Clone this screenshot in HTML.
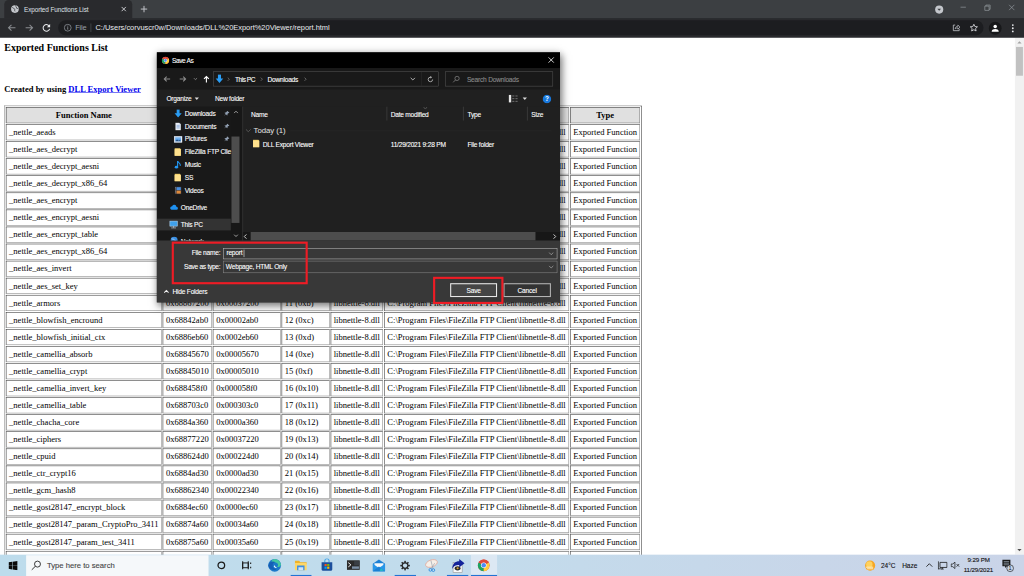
<!DOCTYPE html>
<html><head><meta charset="utf-8"><title>Exported Functions List</title>
<style>
html,body{margin:0;padding:0;width:1024px;height:576px;overflow:hidden;background:#fff;}
#root{position:absolute;left:0;top:0;width:1920px;height:1080px;transform:scale(0.5333333);transform-origin:0 0;overflow:hidden;background:#fff;font-family:"Liberation Sans",sans-serif;}
#root *{box-sizing:border-box;}
.abs{position:absolute;}

/* ---------- chrome ---------- */
#tabstrip{position:absolute;left:0;top:0;width:1920px;height:40px;background:#3c3f42;}
#tab{position:absolute;left:8px;top:0;width:240px;height:34px;background:#292a2d;border-radius:8px 8px 0 0;}
#tab .title{position:absolute;left:37px;top:10px;font-size:12px;line-height:16px;color:#dfe1e5;white-space:nowrap;letter-spacing:-0.2px;}
#toolbar{position:absolute;left:0;top:34px;width:1920px;height:37px;background:#292a2d;}
#omni{position:absolute;left:109px;top:3.500px;width:1735px;height:28px;border-radius:14px;background:#1c1d20;}
#omni .file{position:absolute;left:32px;top:5px;font-size:14px;line-height:18px;color:#9aa0a6;letter-spacing:-0.3px;}
#omni .sep{position:absolute;left:61px;top:6px;width:1px;height:16px;background:#5f6368;}
#omni .url{position:absolute;left:70px;top:5px;font-size:14px;line-height:18px;color:#e8eaed;white-space:nowrap;letter-spacing:-0.04px;}

/* ---------- dialog ---------- */
#dlg{position:absolute;left:294px;top:98px;width:756px;height:469px;background:#202020;box-shadow:3px 6px 14px rgba(0,0,0,0.5), 0 0 15px rgba(0,0,0,0.09);font-size:12.400px;color:#fff;overflow:hidden;}
#dlg .t{position:absolute;white-space:nowrap;line-height:16px;letter-spacing:-0.420px;margin-top:1.300px;-webkit-text-stroke-width:0.180px;}
#dlgwrap{position:absolute;left:0;top:0;width:1920px;height:1080px;pointer-events:none;}
.red{position:absolute;border:4.700px solid #ee1c25;}

/* ---------- taskbar ---------- */
#tb{position:absolute;left:0;top:1040px;width:1920px;height:40px;background:linear-gradient(90deg,#bddcec 0%,#c2dcec 45%,#c8d6e9 80%,#cad4e8 100%);font-size:12px;color:#111;overflow:hidden;}
#tb .t{position:absolute;white-space:nowrap;line-height:16px;-webkit-text-stroke-width:0.200px;}
#tb .ul{position:absolute;top:37.500px;height:2.500px;background:#2273d3;}
/* ---------- page ---------- */
#page{position:absolute;left:0;top:71px;width:1903px;height:970px;overflow:hidden;background:#fff;font-family:"Liberation Serif",serif;font-size:16px;color:#000;}
#page h3{position:absolute;left:8px;top:8px;margin:0;font-size:18.72px;font-weight:bold;line-height:21px;white-space:nowrap;}
#page h4{position:absolute;left:8px;top:87px;margin:0;font-size:16px;font-weight:bold;line-height:18px;white-space:nowrap;}
#page h4 a{color:#0000ee;text-decoration:underline;}
#page table{position:absolute;left:8px;top:127px;border-collapse:separate;border-spacing:2px;border:1px outset #808080;font-size:16px;line-height:18px;}
#page table td,#page table th{border:1px inset #808080;padding:5px;white-space:nowrap;box-sizing:content-box;}
#page table th{background:#e0e0e0;font-weight:bold;text-align:center;}
#page table th:nth-child(4){min-width:77.500px;}
#page table td{background:#fff;}
</style></head><body>
<div id="root">

<div id="tabstrip">
  <div id="tab">
    <svg class="abs" style="left:12px;top:9px" width="16" height="16" viewBox="0 0 16 16"><circle cx="8" cy="8" r="7.2" fill="#c4c7cc"/><path d="M3 5.2c1.3-.3 2.2.4 2.4 1.4.2 1 .9 1.2 1.7 1.3.9.2 1.1 1 .7 1.8-.5.9-.4 1.900.3 2.600M9.200 1.400c-.5 1 .1 1.700 1 2 .9.3 1.100 1 .6 1.700-.5.800.1 1.600 1 1.600 1 0 1.800.4 2.200 1.200" stroke="#292a2d" stroke-width="1.300" fill="none"/></svg>
    <div class="title">Exported Functions List</div>
    <svg class="abs" style="left:216px;top:9px" width="16" height="16" viewBox="0 0 16 16"><path d="M4 4l8 8M12 4l-8 8" stroke="#dfe1e5" stroke-width="1.600"/></svg>
  </div>
  <svg class="abs" style="left:261px;top:8px" width="18" height="18" viewBox="0 0 18 18"><path d="M9 3v12M3 9h12" stroke="#c4c7cc" stroke-width="1.800"/></svg>
  <!-- window controls -->
  <svg class="abs" style="left:1751px;top:7.500px" width="20" height="20" viewBox="0 0 20 20"><circle cx="10" cy="10" r="7.600" fill="#c4c7cc"/><path d="M6.500 8.300h7l-3.500 4z" fill="#3c3f42"/></svg>
  <svg class="abs" style="left:1797px;top:5px" width="18" height="18" viewBox="0 0 18 18"><path d="M4 8.500h10" stroke="#9aa0a6" stroke-width="1.200"/></svg>
  <svg class="abs" style="left:1842px;top:5px" width="18" height="18" viewBox="0 0 18 18"><path d="M4.500 6.500h8v8h-8zM6.500 6.500v-2h8v8h-2" stroke="#9aa0a6" stroke-width="1.200" fill="none"/></svg>
  <svg class="abs" style="left:1888px;top:5px" width="18" height="18" viewBox="0 0 18 18"><path d="M4 4l10 10M14 4l-10 10" stroke="#9aa0a6" stroke-width="1.200"/></svg>
</div>
<div id="toolbar">
  <svg class="abs" style="left:12px;top:7.500px" width="20" height="20" viewBox="0 0 20 20"><path d="M17 10H4M9.500 4.500L4 10l5.500 5.500" stroke="#8a8d91" stroke-width="2" fill="none"/></svg>
  <svg class="abs" style="left:45px;top:7.500px" width="20" height="20" viewBox="0 0 20 20"><path d="M3 10h13M10.500 4.500L16 10l-5.500 5.500" stroke="#8a8d91" stroke-width="2" fill="none"/></svg>
  <svg class="abs" style="left:77px;top:7.500px" width="20" height="20" viewBox="0 0 20 20"><path d="M15.800 8A6.200 6.200 0 1 0 16 12" stroke="#e8eaed" stroke-width="2" fill="none"/><path d="M17 3v6h-6z" fill="#e8eaed"/></svg>
  <div id="omni">
    <svg class="abs" style="left:9.500px;top:6px" width="16" height="16" viewBox="0 0 16 16"><circle cx="8" cy="8" r="6.400" stroke="#9aa0a6" stroke-width="1.300" fill="none"/><path d="M8 7v4.500M8 4.300v1.500" stroke="#9aa0a6" stroke-width="1.500"/></svg>
    <div class="file">File</div><div class="sep"></div>
    <div class="url">C:/Users/corvuscr0w/Downloads/DLL%20Export%20Viewer/report.html</div>
    <svg class="abs" style="left:1675px;top:5px" width="18" height="18" viewBox="0 0 18 18"><path d="M7 4H3.500v10.500h11V11" stroke="#c4c7cc" stroke-width="1.500" fill="none"/><path d="M7 11c.3-3 2-4.500 5-4.700V4l4 3.800-4 3.800V9.200C10 9.200 8.200 9.700 7 11z" fill="none" stroke="#c4c7cc" stroke-width="1.300"/></svg>
    <svg class="abs" style="left:1708px;top:5px" width="18" height="18" viewBox="0 0 18 18"><path d="M9 2.500l2 4.300 4.700.5-3.500 3.200 1 4.600L9 12.700l-4.200 2.400 1-4.600L2.300 7.300 7 6.800z" stroke="#e8eaed" stroke-width="1.500" fill="none" stroke-linejoin="round"/></svg>
  </div>
  <svg class="abs" style="left:1853px;top:6px" width="26" height="26" viewBox="0 0 26 26"><circle cx="13" cy="13" r="12" fill="#17181a"/><circle cx="13" cy="9.500" r="3.300" fill="#fff"/><path d="M6.500 18.500c0-3 3.500-4.300 6.500-4.300s6.500 1.300 6.500 4.300v1h-13z" fill="#fff"/></svg>
  <svg class="abs" style="left:1889px;top:9px" width="20" height="20" viewBox="0 0 20 20"><circle cx="10" cy="4" r="1.700" fill="#e8eaed"/><circle cx="10" cy="10" r="1.700" fill="#e8eaed"/><circle cx="10" cy="16" r="1.700" fill="#e8eaed"/></svg>
</div>

<div id="page">
<h3>Exported Functions List</h3>
<h4>Created by using <a>DLL Export Viewer</a></h4>
<table><tr><th>Function Name</th><th>Address</th><th>Relative Address</th><th>Ordinal</th><th>Filename</th><th>Full Path</th><th>Type</th></tr>
<tr><td>_nettle_aeads</td><td>0x68877240</td><td>0x00037240</td><td>1 (0x1)</td><td>libnettle-8.dll</td><td>C:\Program Files\FileZilla FTP Client\libnettle-8.dll</td><td>Exported Function</td></tr>
<tr><td>_nettle_aes_decrypt</td><td>0x68841500</td><td>0x00001500</td><td>2 (0x2)</td><td>libnettle-8.dll</td><td>C:\Program Files\FileZilla FTP Client\libnettle-8.dll</td><td>Exported Function</td></tr>
<tr><td>_nettle_aes_decrypt_aesni</td><td>0x68861eb0</td><td>0x00021eb0</td><td>3 (0x3)</td><td>libnettle-8.dll</td><td>C:\Program Files\FileZilla FTP Client\libnettle-8.dll</td><td>Exported Function</td></tr>
<tr><td>_nettle_aes_decrypt_x86_64</td><td>0x68861640</td><td>0x00021640</td><td>4 (0x4)</td><td>libnettle-8.dll</td><td>C:\Program Files\FileZilla FTP Client\libnettle-8.dll</td><td>Exported Function</td></tr>
<tr><td>_nettle_aes_encrypt</td><td>0x68841a70</td><td>0x00001a70</td><td>5 (0x5)</td><td>libnettle-8.dll</td><td>C:\Program Files\FileZilla FTP Client\libnettle-8.dll</td><td>Exported Function</td></tr>
<tr><td>_nettle_aes_encrypt_aesni</td><td>0x68861f50</td><td>0x00021f50</td><td>6 (0x6)</td><td>libnettle-8.dll</td><td>C:\Program Files\FileZilla FTP Client\libnettle-8.dll</td><td>Exported Function</td></tr>
<tr><td>_nettle_aes_encrypt_table</td><td>0x6886e640</td><td>0x0002e640</td><td>7 (0x7)</td><td>libnettle-8.dll</td><td>C:\Program Files\FileZilla FTP Client\libnettle-8.dll</td><td>Exported Function</td></tr>
<tr><td>_nettle_aes_encrypt_x86_64</td><td>0x68861a90</td><td>0x00021a90</td><td>8 (0x8)</td><td>libnettle-8.dll</td><td>C:\Program Files\FileZilla FTP Client\libnettle-8.dll</td><td>Exported Function</td></tr>
<tr><td>_nettle_aes_invert</td><td>0x68841fe0</td><td>0x00001fe0</td><td>9 (0x9)</td><td>libnettle-8.dll</td><td>C:\Program Files\FileZilla FTP Client\libnettle-8.dll</td><td>Exported Function</td></tr>
<tr><td>_nettle_aes_set_key</td><td>0x688421a0</td><td>0x000021a0</td><td>10 (0xa)</td><td>libnettle-8.dll</td><td>C:\Program Files\FileZilla FTP Client\libnettle-8.dll</td><td>Exported Function</td></tr>
<tr><td>_nettle_armors</td><td>0x68867200</td><td>0x00037200</td><td>11 (0xb)</td><td>libnettle-8.dll</td><td>C:\Program Files\FileZilla FTP Client\libnettle-8.dll</td><td>Exported Function</td></tr>
<tr><td>_nettle_blowfish_encround</td><td>0x68842ab0</td><td>0x00002ab0</td><td>12 (0xc)</td><td>libnettle-8.dll</td><td>C:\Program Files\FileZilla FTP Client\libnettle-8.dll</td><td>Exported Function</td></tr>
<tr><td>_nettle_blowfish_initial_ctx</td><td>0x6886eb60</td><td>0x0002eb60</td><td>13 (0xd)</td><td>libnettle-8.dll</td><td>C:\Program Files\FileZilla FTP Client\libnettle-8.dll</td><td>Exported Function</td></tr>
<tr><td>_nettle_camellia_absorb</td><td>0x68845670</td><td>0x00005670</td><td>14 (0xe)</td><td>libnettle-8.dll</td><td>C:\Program Files\FileZilla FTP Client\libnettle-8.dll</td><td>Exported Function</td></tr>
<tr><td>_nettle_camellia_crypt</td><td>0x68845010</td><td>0x00005010</td><td>15 (0xf)</td><td>libnettle-8.dll</td><td>C:\Program Files\FileZilla FTP Client\libnettle-8.dll</td><td>Exported Function</td></tr>
<tr><td>_nettle_camellia_invert_key</td><td>0x688458f0</td><td>0x000058f0</td><td>16 (0x10)</td><td>libnettle-8.dll</td><td>C:\Program Files\FileZilla FTP Client\libnettle-8.dll</td><td>Exported Function</td></tr>
<tr><td>_nettle_camellia_table</td><td>0x688703c0</td><td>0x000303c0</td><td>17 (0x11)</td><td>libnettle-8.dll</td><td>C:\Program Files\FileZilla FTP Client\libnettle-8.dll</td><td>Exported Function</td></tr>
<tr><td>_nettle_chacha_core</td><td>0x6884a360</td><td>0x0000a360</td><td>18 (0x12)</td><td>libnettle-8.dll</td><td>C:\Program Files\FileZilla FTP Client\libnettle-8.dll</td><td>Exported Function</td></tr>
<tr><td>_nettle_ciphers</td><td>0x68877220</td><td>0x00037220</td><td>19 (0x13)</td><td>libnettle-8.dll</td><td>C:\Program Files\FileZilla FTP Client\libnettle-8.dll</td><td>Exported Function</td></tr>
<tr><td>_nettle_cpuid</td><td>0x688624d0</td><td>0x000224d0</td><td>20 (0x14)</td><td>libnettle-8.dll</td><td>C:\Program Files\FileZilla FTP Client\libnettle-8.dll</td><td>Exported Function</td></tr>
<tr><td>_nettle_ctr_crypt16</td><td>0x6884ad30</td><td>0x0000ad30</td><td>21 (0x15)</td><td>libnettle-8.dll</td><td>C:\Program Files\FileZilla FTP Client\libnettle-8.dll</td><td>Exported Function</td></tr>
<tr><td>_nettle_gcm_hash8</td><td>0x68862340</td><td>0x00022340</td><td>22 (0x16)</td><td>libnettle-8.dll</td><td>C:\Program Files\FileZilla FTP Client\libnettle-8.dll</td><td>Exported Function</td></tr>
<tr><td>_nettle_gost28147_encrypt_block</td><td>0x6884ec60</td><td>0x0000ec60</td><td>23 (0x17)</td><td>libnettle-8.dll</td><td>C:\Program Files\FileZilla FTP Client\libnettle-8.dll</td><td>Exported Function</td></tr>
<tr><td>_nettle_gost28147_param_CryptoPro_3411</td><td>0x68874a60</td><td>0x00034a60</td><td>24 (0x18)</td><td>libnettle-8.dll</td><td>C:\Program Files\FileZilla FTP Client\libnettle-8.dll</td><td>Exported Function</td></tr>
<tr><td>_nettle_gost28147_param_test_3411</td><td>0x68875a60</td><td>0x00035a60</td><td>25 (0x19)</td><td>libnettle-8.dll</td><td>C:\Program Files\FileZilla FTP Client\libnettle-8.dll</td><td>Exported Function</td></tr>
<tr><td>_nettle_gost28147_param_test_89</td><td>0x68876a60</td><td>0x00036a60</td><td>26 (0x1a)</td><td>libnettle-8.dll</td><td>C:\Program Files\FileZilla FTP Client\libnettle-8.dll</td><td>Exported Function</td></tr>
</table>
</div>

<div class="abs" style="left:1903px;top:71px;width:17px;height:969px;background:#f1f1f1;">
  <svg class="abs" style="left:0;top:0" width="17" height="17" viewBox="0 0 17 17"><path d="M4.500 10.500l4-4 4 4z" fill="#a3a3a3"/></svg>
  <div class="abs" style="left:2px;top:17px;width:13px;height:54px;background:#c1c1c1;"></div>
  <svg class="abs" style="left:0;top:952px" width="17" height="17" viewBox="0 0 17 17"><path d="M4.500 6.500l4 4 4-4z" fill="#505050"/></svg>
</div>


<div id="dlg">
  <!-- title bar -->
  <div class="abs" style="left:0;top:0;width:756px;height:30px;background:#000;"></div>
  <svg class="abs" style="left:9px;top:7.500px" width="14.500" height="14.500" viewBox="0 0 16 16"><circle cx="8" cy="8" r="7.500" fill="#de4b3c"/><path d="M8 8L1.500 4.300A7.500 7.500 0 0 0 8 15.500z" fill="#1da462"/><path d="M8 8l0 7.500A7.500 7.500 0 0 0 14.500 4.300z" fill="#ffcd40"/><path d="M8 8L1.500 4.300A7.500 7.500 0 0 1 14.500 4.300z" fill="#de4b3c"/><circle cx="8" cy="8" r="3.400" fill="#fff"/><circle cx="8" cy="8" r="2.700" fill="#4c8bf5"/></svg>
  <div class="t" style="left:28.500px;top:6.500px;letter-spacing:-0.800px">Save As</div>
  <svg class="abs" style="left:733px;top:7.500px" width="13" height="13" viewBox="0 0 13 13"><path d="M1.500 1.500l10 10M11.500 1.500l-10 10" stroke="#fff" stroke-width="1.500"/></svg>
  <!-- nav bar -->
  <div class="abs" style="left:0;top:30px;width:756px;height:40px;background:#191919;"></div>
  <svg class="abs" style="left:11px;top:42px" width="16" height="16" viewBox="0 0 16 16"><path d="M14 8H3M7.500 3.500L3 8l4.500 4.500" stroke="#8c8c8c" stroke-width="2" fill="none"/></svg>
  <svg class="abs" style="left:41px;top:42px" width="16" height="16" viewBox="0 0 16 16"><path d="M2 8h11M8.500 3.500L13 8l-4.500 4.500" stroke="#8c8c8c" stroke-width="2" fill="none"/></svg>
  <svg class="abs" style="left:68px;top:46px" width="9" height="8" viewBox="0 0 9 8"><path d="M1.500 2.500l3 3 3-3" stroke="#8c8c8c" stroke-width="1.600" fill="none"/></svg>
  <svg class="abs" style="left:85px;top:42px" width="16" height="16" viewBox="0 0 16 16"><path d="M8 14.500V3.500M3.500 8L8 3.500 12.500 8" stroke="#fff" stroke-width="2.100" fill="none"/></svg>
  <div class="abs" style="left:106px;top:36px;width:423px;height:28px;border:1px solid #555;background:#191919;"></div>
  <svg class="abs" style="left:109px;top:41px" width="17" height="17" viewBox="0 0 16 16"><path d="M5.300 0.500h5.400v7h4L8 15.500 1.300 7.500h4z" fill="#2a9df4"/></svg>
  <svg class="abs" style="left:131px;top:46px" width="7" height="9" viewBox="0 0 7 9"><path d="M2 1.500l3 3-3 3" stroke="#9a9a9a" stroke-width="1.100" fill="none"/></svg>
  <div class="t" style="left:146.500px;top:41.500px;letter-spacing:-0.900px">This PC</div>
  <svg class="abs" style="left:193px;top:46px" width="7" height="9" viewBox="0 0 7 9"><path d="M2 1.500l3 3-3 3" stroke="#9a9a9a" stroke-width="1.100" fill="none"/></svg>
  <div class="t" style="left:207.500px;top:41.500px">Downloads</div>
  <svg class="abs" style="left:275px;top:46px" width="7" height="9" viewBox="0 0 7 9"><path d="M2 1.500l3 3-3 3" stroke="#9a9a9a" stroke-width="1.100" fill="none"/></svg>
  <svg class="abs" style="left:474px;top:46px" width="12" height="9" viewBox="0 0 12 9"><path d="M2 2l4 4 4-4" stroke="#dcdcdc" stroke-width="1.500" fill="none"/></svg>
  <div class="abs" style="left:496px;top:37px;width:1px;height:26px;background:#2e2e2e;"></div>
  <svg class="abs" style="left:506px;top:44px" width="14" height="14" viewBox="0 0 16 16"><path d="M12.800 8A4.800 4.800 0 1 1 8 3.200" stroke="#dcdcdc" stroke-width="1.500" fill="none"/><path d="M8 .5l3.300 2.700L8 5.900z" fill="#dcdcdc"/></svg>
  <div class="abs" style="left:541px;top:36px;width:202px;height:28px;border:1px solid #555;background:#191919;"></div>
  <svg class="abs" style="left:554px;top:43px" width="15" height="15" viewBox="0 0 15 15"><circle cx="9" cy="6" r="4" stroke="#8c8c8c" stroke-width="1.300" fill="none"/><path d="M6 9L1.500 13.500" stroke="#8c8c8c" stroke-width="1.400"/></svg>
  <div class="t" style="left:581.500px;top:41.500px;color:#8a8a8a">Search Downloads</div>
  <!-- toolbar -->
  <div class="abs" style="left:0;top:70px;width:756px;height:32px;background:#202020;"></div>
  <div class="t" style="left:18px;top:79px">Organize</div>
  <svg class="abs" style="left:70px;top:84px" width="10" height="7" viewBox="0 0 10 7"><path d="M1 1h8l-4 4.500z" fill="#dcdcdc"/></svg>
  <div class="t" style="left:109px;top:79px">New folder</div>
  <svg class="abs" style="left:659px;top:78px" width="20" height="18" viewBox="0 0 20 18"><rect x="1" y="2" width="4.500" height="14" fill="#e6e6e6"/><path d="M7.500 4h4M13.500 4h4M7.500 9h4M13.500 9h4M7.500 14h4M13.500 14h4" stroke="#8c8c8c" stroke-width="1.400"/></svg>
  <svg class="abs" style="left:685px;top:84px" width="10" height="7" viewBox="0 0 10 7"><path d="M1 1h8l-4 4.500z" fill="#dcdcdc"/></svg>
  <svg class="abs" style="left:723px;top:79px" width="17" height="17" viewBox="0 0 17 17"><circle cx="8.500" cy="8.500" r="8" fill="#1878dc"/><text x="8.500" y="12.700" font-family="Liberation Sans" font-weight="bold" font-size="12" text-anchor="middle" fill="#fff">?</text></svg>
  <!-- sidebar -->
  <div class="abs" style="left:0;top:102px;width:156px;height:251px;background:#191919;"></div>
  <div class="abs" style="left:0;top:312px;width:139px;height:22px;background:#333;"></div>
  <div class="abs" style="left:139px;top:102px;width:21px;height:251px;background:#171717;"></div>
  <div class="abs" style="left:139.500px;top:158px;width:15px;height:162px;background:#4d4d4d;"></div>
  <svg class="abs" style="left:142.500px;top:107.500px" width="11" height="8" viewBox="0 0 11 8"><path d="M2 6l3.500-3.500L9 6" stroke="#a8a8a8" stroke-width="1.700" fill="none"/></svg>
  <svg class="abs" style="left:142.500px;top:340px" width="11" height="8" viewBox="0 0 11 8"><path d="M2 2l3.500 3.500L9 2" stroke="#b0b0b0" stroke-width="1.700" fill="none"/></svg>
  <div class="abs" style="left:160px;top:102px;width:1.500px;height:251px;background:#2e2e2e;"></div>
  <svg class="abs" style="left:32px;top:107px" width="16" height="16" viewBox="0 0 16 16"><path d="M5.300 0.500h5.400v7h4L8 15.500 1.300 7.500h4z" fill="#2a9df4"/></svg>
  <div class="t" style="left:52.500px;top:106.0px">Downloads</div>
  <svg class="abs" style="left:32px;top:131px" width="16" height="16" viewBox="0 0 16 16"><path d="M3 1h7l3 3v11H3z" fill="#e9eef5"/><path d="M5 6h6M5 8.500h6M5 11h6" stroke="#5a8ad0" stroke-width="1"/><path d="M10 1v3h3" fill="#b5c7e0"/></svg>
  <div class="t" style="left:52.500px;top:130.0px">Documents</div>
  <svg class="abs" style="left:32px;top:155px" width="16" height="16" viewBox="0 0 16 16"><rect x="0.500" y="2.500" width="15" height="11.500" fill="#f2f5fa" stroke="#c5d2e2"/><rect x="2.500" y="4.500" width="11" height="7.500" fill="#5aa2ea"/><path d="M2.500 12l3.500-3.500 3 2.500 2-1.500 2.500 2.500z" fill="#2b4f7a"/><rect x="2.500" y="4.500" width="11" height="2" fill="#9cc8f5"/></svg>
  <div class="t" style="left:52.500px;top:154.0px">Pictures</div>
  <svg class="abs" style="left:32px;top:179px" width="16" height="16" viewBox="0 0 16 16"><path d="M1.500 1h10l1.500 2v12H1.500z" fill="#f5d36c"/><path d="M1.500 3h11.500v12H1.500z" fill="#ffe18d"/></svg>
  <div class="t" style="left:52.500px;top:178.0px">FileZilla FTP Clie</div>
  <svg class="abs" style="left:32px;top:203px" width="16" height="16" viewBox="0 0 16 16"><path d="M7 1v11" stroke="#2196f3" stroke-width="2"/><ellipse cx="4.800" cy="12.500" rx="3.200" ry="2.500" fill="#2196f3"/><path d="M7 1.500c1.500 3 6 3.500 5 8.500" stroke="#2196f3" stroke-width="2" fill="none"/></svg>
  <div class="t" style="left:52.500px;top:202.0px">Music</div>
  <svg class="abs" style="left:32px;top:227px" width="16" height="16" viewBox="0 0 16 16"><path d="M1.500 1h10l1.500 2v12H1.500z" fill="#f5d36c"/><path d="M1.500 3h11.500v12H1.500z" fill="#ffe18d"/></svg>
  <div class="t" style="left:52.500px;top:226.0px">SS</div>
  <svg class="abs" style="left:32px;top:251px" width="16" height="16" viewBox="0 0 16 16"><rect x="2" y="1" width="12" height="14" fill="#3a3a40"/><rect x="5" y="2" width="8" height="5.500" fill="#4a90e0"/><rect x="5" y="8.500" width="8" height="5.500" fill="#e08a3a"/><path d="M3 2.500h1M3 5h1M3 7.500h1M3 10h1M3 12.500h1" stroke="#ddd" stroke-width="1.200"/></svg>
  <div class="t" style="left:52.500px;top:250.0px">Videos</div>
  <svg class="abs" style="left:126px;top:109px" width="11" height="11" viewBox="0 0 12 12"><path d="M7 1l4 4-1 .8-1-.3-2 2 .3 2-1 .8-2.300-2.300L1.500 10.500 1 10l2.500-2.500L1.200 5.200 2 4.200l2 .3 2-2-.3-1z" fill="#93a1b4"/></svg>
  <svg class="abs" style="left:126px;top:133px" width="11" height="11" viewBox="0 0 12 12"><path d="M7 1l4 4-1 .8-1-.3-2 2 .3 2-1 .8-2.300-2.300L1.500 10.500 1 10l2.500-2.500L1.200 5.200 2 4.200l2 .3 2-2-.3-1z" fill="#93a1b4"/></svg>
  <svg class="abs" style="left:126px;top:157px" width="11" height="11" viewBox="0 0 12 12"><path d="M7 1l4 4-1 .8-1-.3-2 2 .3 2-1 .8-2.300-2.300L1.500 10.500 1 10l2.500-2.500L1.200 5.200 2 4.200l2 .3 2-2-.3-1z" fill="#93a1b4"/></svg>
  <svg class="abs" style="left:23px;top:283px" width="17" height="16" viewBox="0 0 17 16"><path d="M4.500 12.500h9a3 3 0 0 0 .3-6 4.200 4.200 0 0 0-8-1A3.600 3.600 0 0 0 4.500 12.500z" fill="#1e90f0"/></svg>
  <div class="t" style="left:45px;top:282.0px">OneDrive</div>
  <svg class="abs" style="left:23px;top:315px" width="17" height="16" viewBox="0 0 17 16"><rect x="1.500" y="1.500" width="14" height="9.500" fill="#3fa0ea" stroke="#bcd8f0" stroke-width="1"/><path d="M4 14.500h9M8.500 11v3" stroke="#c8d0d8" stroke-width="1.400"/></svg>
  <div class="t" style="left:45px;top:314.0px">This PC</div>
  <svg class="abs" style="left:25px;top:345px" width="15" height="15" viewBox="0 0 15 15"><circle cx="7.500" cy="7.500" r="6.500" fill="#3a8ee0"/><path d="M3 4.500c2 1.500 3 .5 4.500 1.500s1 3 3 3" stroke="#bfe0ff" stroke-width="1.400" fill="none"/></svg>
  <div class="t" style="left:45px;top:346.0px">Network</div>
  <!-- main pane header -->
  <div class="t" style="left:176.500px;top:107.500px">Name</div>
  <div class="abs" style="left:431px;top:102px;width:1px;height:26px;background:#4d4d4d;"></div>
  <div class="t" style="left:438.500px;top:107.500px">Date modified</div>
  <svg class="abs" style="left:499px;top:102px" width="9" height="5" viewBox="0 0 9 5"><path d="M1 1l3.500 3L8 1" stroke="#8c8c8c" stroke-width="1" fill="none"/></svg>
  <div class="abs" style="left:574px;top:102px;width:1px;height:26px;background:#4d4d4d;"></div>
  <div class="t" style="left:582.500px;top:107.500px">Type</div>
  <div class="abs" style="left:694px;top:102px;width:1px;height:26px;background:#4d4d4d;"></div>
  <div class="t" style="left:702px;top:107.500px">Size</div>
  <!-- group -->
  <svg class="abs" style="left:166px;top:143px" width="11" height="8" viewBox="0 0 11 8"><path d="M1 1.500l4.500 4.500L10 1.500" stroke="#7a7a7a" stroke-width="1.100" fill="none"/></svg>
  <div class="t" style="left:181.500px;top:135.700px;font-size:14.600px;line-height:19px;color:#e4e4e4;letter-spacing:-0.100px;-webkit-text-stroke-width:0">Today (1)</div>
  <div class="abs" style="left:250px;top:147px;width:490px;height:1px;background:#2c2c2c;"></div>
  <svg class="abs" style="left:178.500px;top:163px" width="16" height="16" viewBox="0 0 16 16"><path d="M1.500 1h10l1.500 2v12H1.500z" fill="#f5d36c"/><path d="M1.500 3h11.500v12H1.500z" fill="#ffe18d"/></svg>
  <div class="t" style="left:198.500px;top:163.500px">DLL Export Viewer</div>
  <div class="t" style="left:438.500px;top:163.500px">11/29/2021 9:28 PM</div>
  <div class="t" style="left:582.500px;top:163.500px">File folder</div>
  <!-- h scrollbar -->
  <div class="abs" style="left:161.500px;top:337px;width:594.500px;height:16px;background:#171717;"></div>
  <div class="abs" style="left:176px;top:337px;width:534px;height:16px;background:#4d4d4d;"></div>
  <svg class="abs" style="left:162px;top:340px" width="8" height="11" viewBox="0 0 8 11"><path d="M6 1.500l-4 4 4 4" stroke="#d8d8d8" stroke-width="1.800" fill="none"/></svg>
  <svg class="abs" style="left:742px;top:340px" width="8" height="11" viewBox="0 0 8 11"><path d="M2 1.500l4 4-4 4" stroke="#d8d8d8" stroke-width="1.800" fill="none"/></svg>
  <!-- bottom panel -->
  <div class="abs" style="left:0;top:353px;width:756px;height:116px;background:#383838;"></div>
  <div class="t" style="left:0;top:367.700px;width:119px;text-align:right">File name:</div>
  <div class="abs" style="left:124.500px;top:366.500px;width:626px;height:21px;border:1.500px solid #bdbdbd;background:#383838;"></div>
  <div class="t" style="left:130.500px;top:367.700px">report</div>
  <div class="abs" style="left:162.500px;top:370px;width:1px;height:14px;background:#fff;"></div>
  <svg class="abs" style="left:734px;top:374px" width="11" height="8" viewBox="0 0 11 8"><path d="M1.500 1.500l4 4 4-4" stroke="#bdbdbd" stroke-width="1.200" fill="none"/></svg>
  <div class="t" style="left:0;top:393.700px;width:119px;text-align:right;letter-spacing:-0.550px">Save as type:</div>
  <div class="abs" style="left:124.500px;top:391px;width:626px;height:23px;border:1px solid #8c8c8c;background:#383838;"></div>
  <div class="t" style="left:129.500px;top:393.700px">Webpage, HTML Only</div>
  <svg class="abs" style="left:734px;top:399px" width="11" height="8" viewBox="0 0 11 8"><path d="M1.500 1.500l4 4 4-4" stroke="#bdbdbd" stroke-width="1.200" fill="none"/></svg>
  <svg class="abs" style="left:11.500px;top:444px" width="12" height="9" viewBox="0 0 12 9"><path d="M2 6.500l4-4 4 4" stroke="#f0f0f0" stroke-width="2" fill="none"/></svg>
  <div class="t" style="left:29.500px;top:440.500px">Hide Folders</div>
  <div class="abs" style="left:550px;top:432.500px;width:88px;height:26px;border:2px solid #e8e8e8;background:#454545;"></div>
  <div class="t" style="left:550px;top:437.500px;width:88px;text-align:center">Save</div>
  <div class="abs" style="left:650px;top:432.500px;width:88.500px;height:26px;border:2px solid #b4b4b4;background:#333;"></div>
  <div class="t" style="left:650px;top:437.500px;width:88.500px;text-align:center">Cancel</div>
</div>
<div class="red" style="left:322.300px;top:453.200px;width:255px;height:79.800px;"></div>
<div class="red" style="left:811.900px;top:519.400px;width:132px;height:50.800px;"></div>


<div id="tb">
  <svg class="abs" style="left:15.500px;top:11.500px" width="17" height="17" viewBox="0 0 17 17"><path d="M0 2.400l6.900-1v6.700H0zM7.800 1.300L17 0v8.100H7.800zM0 8.900h6.900v6.700l-6.900-1zM7.800 8.900H17V17l-9.200-1.300z" fill="#0a0a0a"/></svg>
  <div class="abs" style="left:49px;top:0.500px;width:342px;height:40px;background:#f5f8fa;"></div>
  <svg class="abs" style="left:58px;top:9.500px" width="20" height="20" viewBox="0 0 20 20"><circle cx="12.300" cy="7.700" r="5.600" stroke="#2a2a2a" stroke-width="1.700" fill="none"/><path d="M8.300 11.700L1.500 18.500" stroke="#2a2a2a" stroke-width="1.800"/></svg>
  <div class="t" style="left:88px;top:11px;font-size:14.400px;line-height:18px;color:#444;-webkit-text-stroke-width:0.200px;">Type here to search</div>
  <svg class="abs" style="left:404px;top:8.500px" width="22" height="22" viewBox="0 0 22 22"><circle cx="11" cy="11" r="6.200" stroke="#1a1a1a" stroke-width="2.400" fill="none"/></svg>
  <svg class="abs" style="left:451px;top:8.500px" width="24" height="22" viewBox="0 0 24 22"><path d="M4 3.500v15M14.500 3.500v15" stroke="#1a1a1a" stroke-width="2"/><path d="M4 6.500h10.500v9H4z" stroke="#1a1a1a" stroke-width="1.800" fill="none"/><path d="M19 5.500v3M19 13.500v3" stroke="#1a1a1a" stroke-width="2"/></svg>
  <!-- edge -->
  <svg class="abs" style="left:501.500px;top:7px" width="26" height="26" viewBox="0 0 24 24"><circle cx="12" cy="12" r="11" fill="#1b78c9"/><path d="M12 1a11 11 0 0 1 11 10c-1 3-4 4.500-7 4 2-1.500 2.500-4 1-6-2-2.500-6-2.500-9 0C5 5 8 1.500 12 1z" fill="#45c8a0"/><path d="M1 12C2 6 9 3 14 7c-3-.5-5.500 1.500-5.500 5s2.500 6.500 6.500 7c-6 2.500-14-.5-14-7z" fill="#155fb5"/><path d="M12.500 12.500c0 2 1.500 3.500 4 3.300-1 .9-4 1.200-5.500-.8-1-1.500-.3-3.500 1.500-2.500z" fill="#e8f4ff"/></svg>
  <!-- explorer -->
  <svg class="abs" style="left:551.500px;top:9px" width="24" height="22" viewBox="0 0 24 22"><path d="M1 2.500h8l2 2.500h12v4H1z" fill="#f0b429"/><path d="M1 6.500h22V20H1z" fill="#ffd766"/><path d="M5 11.500h14V20H5z" fill="#3f8ee0"/><path d="M7.500 14.500h9V20h-9z" fill="#cfe4f8"/></svg>
  <!-- store -->
  <svg class="abs" style="left:600.500px;top:7px" width="24" height="25" viewBox="0 0 24 25"><path d="M8 7V4.500a4 4 0 0 1 8 0V7" stroke="#2f9be8" stroke-width="1.800" fill="none"/><path d="M2 7h20v14a2 2 0 0 1-2 2H4a2 2 0 0 1-2-2z" fill="#1d4f9c"/><rect x="7.500" y="10.500" width="4" height="4" fill="#f25022"/><rect x="12.500" y="10.500" width="4" height="4" fill="#7fba00"/><rect x="7.500" y="15.500" width="4" height="4" fill="#00a4ef"/><rect x="12.500" y="15.500" width="4" height="4" fill="#ffb900"/></svg>
  <!-- terminal -->
  <svg class="abs" style="left:649.500px;top:10px" width="25" height="21" viewBox="0 0 25 21"><rect x="0.500" y="0.500" width="24" height="18" fill="#2b2b2b"/><path d="M3 5l5 4-5 4" stroke="#f2f2f2" stroke-width="1.800" fill="none"/><rect x="10" y="12" width="13" height="4.500" fill="#7a8fa6"/><rect x="14" y="2" width="10" height="8" fill="#3a3f45"/></svg>
  <!-- mail -->
  <svg class="abs" style="left:698px;top:8px" width="25" height="25" viewBox="0 0 25 25"><path d="M1 9L12.500 1 24 9v14H1z" fill="#1b7fd4"/><path d="M4 8h17v9H4z" fill="#f4f8fc"/><path d="M1 9l11.500 8L24 9v14H1z" fill="#2896e8"/><path d="M1 23l11.500-9L24 23z" fill="#1b7fd4"/><path d="M16 17l6 5-8 .5z" fill="#2bd0c0" opacity=".7"/></svg>
  <!-- settings -->
  <svg class="abs" style="left:748.500px;top:9.500px" width="21" height="21" viewBox="0 0 24 24"><g fill="#2a2a2a"><circle cx="12" cy="12" r="7.300"/><rect x="10.300" y="1.800" width="3.400" height="20.400"/><rect x="10.300" y="1.800" width="3.400" height="20.400" transform="rotate(45 12 12)"/><rect x="10.300" y="1.800" width="3.400" height="20.400" transform="rotate(90 12 12)"/><rect x="10.300" y="1.800" width="3.400" height="20.400" transform="rotate(135 12 12)"/></g><circle cx="12" cy="12" r="4.600" fill="#c3dcec"/></svg>
  <!-- snip -->
  <svg class="abs" style="left:795px;top:7px" width="28" height="27" viewBox="0 0 28 27"><ellipse cx="14" cy="9.500" rx="11.500" ry="6.500" transform="rotate(-20 14 9.500)" fill="#f6efe8" stroke="#e4a89a" stroke-width="1.400"/><path d="M13 4l4 16M20 9l-7 11" stroke="#9aa4b0" stroke-width="1.300"/><circle cx="17.500" cy="22" r="2.600" stroke="#2a8ae0" stroke-width="1.600" fill="none"/><circle cx="12" cy="21.500" r="2.600" stroke="#2a8ae0" stroke-width="1.600" fill="none"/></svg>
  <!-- shortcut -->
  <svg class="abs" style="left:846px;top:6px" width="26" height="29" viewBox="0 0 26 29"><rect x="3.500" y="8.500" width="17" height="19" fill="#f8f8f8" stroke="#8a8a8a"/><ellipse cx="12" cy="19.500" rx="5.500" ry="4" fill="#2a2a2a"/><circle cx="12" cy="19.500" r="2" fill="#d8a23a"/><path d="M2 21C2 11 8 6.500 15 6.500V2l10 8-10 8v-4.700C9 13.300 4.500 15 2 21z" fill="#13239a"/></svg>
  <!-- chrome -->
  <div class="abs" style="left:883px;top:0;width:48.500px;height:40px;background:#dce8f3;"></div>
  <svg class="abs" style="left:894.500px;top:8px" width="24" height="24" viewBox="0 0 24 24"><circle cx="12" cy="12" r="11" fill="#de4b3c"/><path d="M12 12L2.470 6.500A11 11 0 0 0 12 23z" fill="#1da462"/><path d="M12 12v11A11 11 0 0 0 21.530 6.500z" fill="#ffcd40"/><path d="M12 12L2.470 6.500A11 11 0 0 1 21.530 6.500z" fill="#de4b3c"/><circle cx="12" cy="12" r="5.200" fill="#fff"/><circle cx="12" cy="12" r="4.200" fill="#4c8bf5"/></svg>
  <div class="ul" style="left:545px;width:38.500px"></div>
  <div class="ul" style="left:740px;width:39.500px"></div>
  <div class="ul" style="left:838px;width:40px"></div>
  <div class="ul" style="left:883px;width:48.500px"></div>
  <!-- tray -->
  <svg class="abs" style="left:1621px;top:10px" width="21" height="21" viewBox="0 0 21 21"><circle cx="10.500" cy="10.500" r="9.500" fill="#f6a623"/><circle cx="9" cy="8.500" r="6" fill="#ffd25e"/><path d="M3.500 13.500h12M5.500 16.500h10" stroke="#fff3d0" stroke-width="1.800" stroke-linecap="round"/></svg>
  <div class="t" style="left:1652px;top:12.500px;font-size:12.300px;letter-spacing:-0.200px;">24°C</div>
  <div class="t" style="left:1691.500px;top:12.500px;font-size:12.300px;letter-spacing:-0.100px;">Haze</div>
  <svg class="abs" style="left:1735px;top:14px" width="15" height="11" viewBox="0 0 15 11"><path d="M2 8.500L7.500 3 13 8.500" stroke="#1a1a1a" stroke-width="1.600" fill="none"/></svg>
  <svg class="abs" style="left:1758px;top:11px" width="19" height="18" viewBox="0 0 19 18"><path d="M4.500 3.500h13v9.500h-13z" stroke="#1a1a1a" stroke-width="1.500" fill="none"/><path d="M1.500 1.500v15M1.500 15.500h6M9 13v3M6.500 16h5" stroke="#1a1a1a" stroke-width="1.400"/></svg>
  <svg class="abs" style="left:1782px;top:12px" width="18" height="16" viewBox="0 0 18 16"><path d="M1.500 5.500h3l4-3.500v12l-4-3.500h-3z" stroke="#1a1a1a" stroke-width="1.400" fill="none"/><path d="M11.500 5.500l5 5M16.500 5.500l-5 5" stroke="#1a1a1a" stroke-width="1.400"/></svg>
  <div class="t" style="left:1803px;top:2px;width:64px;text-align:center;font-size:11.600px;letter-spacing:-0.200px;">9:29 PM</div>
  <div class="t" style="left:1802.500px;top:20.500px;width:64px;text-align:center;font-size:11.600px;letter-spacing:-0.200px;">11/29/2021</div>
  <svg class="abs" style="left:1878px;top:8px" width="24" height="26" viewBox="0 0 24 26"><path d="M1.500 1.500h15v12h-6.500l-3.500 3.500v-3.500h-5z" fill="#1a1a1a"/><path d="M4 5h10M4 8h10M4 11h10" stroke="#c6d6e8" stroke-width="1"/><circle cx="16" cy="17.500" r="6.300" fill="#c9d5e8" stroke="#1a1a1a" stroke-width="1.200"/><text x="16" y="21.300" font-family="Liberation Sans" font-size="10.500" text-anchor="middle" fill="#1a1a1a">1</text></svg>
</div>

</div>
</body></html>
